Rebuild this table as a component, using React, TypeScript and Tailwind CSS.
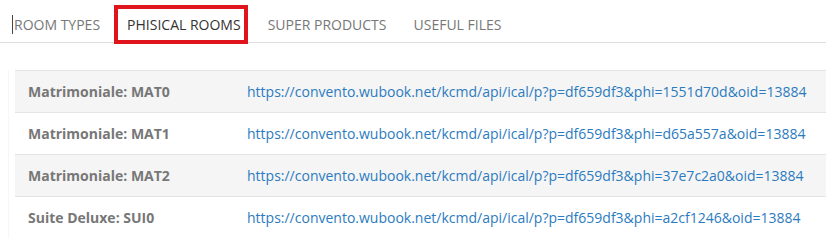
import React from 'react';

const tabs = ['ROOM TYPES', 'PHISICAL ROOMS', 'SUPER PRODUCTS', 'USEFUL FILES'];

const rooms = [
  { name: 'Matrimoniale: MAT0', phi: '1551d70d' },
  { name: 'Matrimoniale: MAT1', phi: 'd65a557a' },
  { name: 'Matrimoniale: MAT2', phi: '37e7c2a0' },
  { name: 'Suite Deluxe: SUI0', phi: 'a2cf1246' },
];

export default function App() {
  return (
    <div className="w-[826px] h-[250px] bg-white overflow-hidden font-['Open_Sans',sans-serif] text-[14px]">
      {/* Tabs */}
      <div className="flex h-[43px] border-b border-[#dddddd] pl-[12px] gap-[27px]">
        {tabs.map((t, i) => (
          <div
            key={t}
            className={`relative flex items-start pt-[15px] leading-5 ${i === 1 ? 'text-[#333333]' : 'text-[#777777]'}`}
          >
            {i === 0 && <span className="inline-block w-px h-[19px] bg-[#444] mr-px" />}
            {t}
            {i === 1 && (
              <div className="absolute left-[-13px] right-[-7px] top-[5px] bottom-[-2px] border-[4px] border-[#e0141c]" />
            )}
          </div>
        ))}
      </div>

      {/* Table */}
      <div className="pt-[27px] pl-[8px]">
        <div className="border-l border-[#f7f7f7] pl-[6px]">
          {rooms.map((r, i) => (
            <div
              key={r.name}
              className={`flex items-center h-[42px] border-t border-[#e4e4e4] ${i % 2 === 0 ? 'bg-[#f5f5f5]' : 'bg-white'}`}
            >
              <div className="w-[232px] pl-[13px] font-bold text-[#777777] shrink-0">{r.name}</div>
              <a className="text-[#2b7bc0] whitespace-nowrap">
                {`https://convento.wubook.net/kcmd/api/ical/p?p=df659df3&phi=${r.phi}&oid=13884`}
              </a>
            </div>
          ))}
        </div>
      </div>
    </div>
  );
}
